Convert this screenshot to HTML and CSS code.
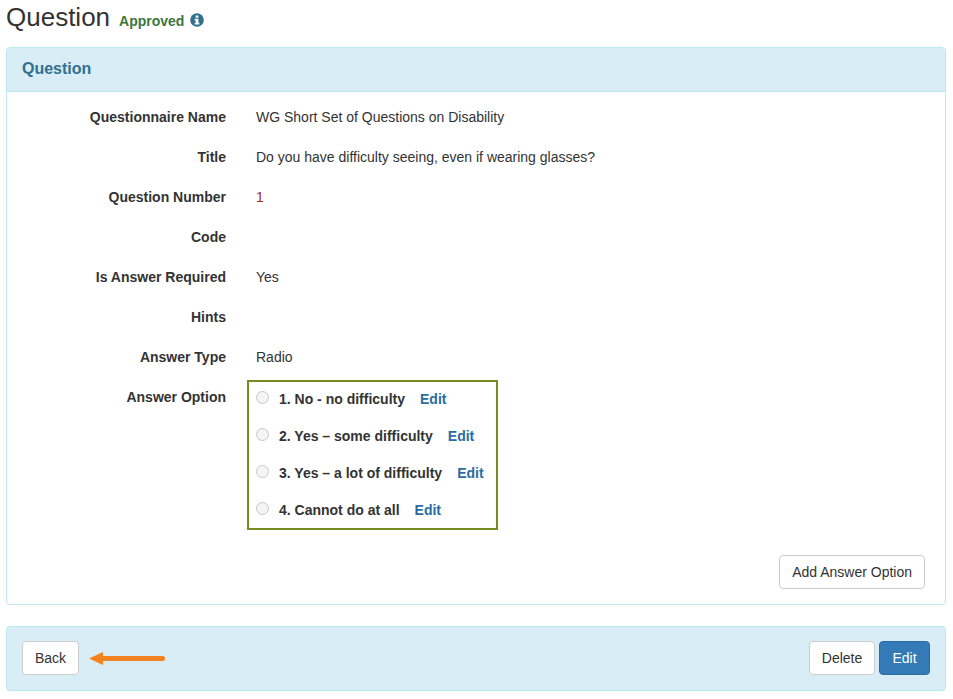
FILE: index.html
```html
<!DOCTYPE html>
<html lang="en">
<head>
<meta charset="utf-8">
<title>Question</title>
<link rel="stylesheet" href="styles.css">
</head>
<body>
<header class="page-head">
  <h1 class="page-title">Question</h1>
  <span class="status">Approved</span>
  <svg class="info-icon" viewBox="0 0 14 14" width="14" height="14" aria-hidden="true">
    <circle cx="7" cy="7" r="6.8" fill="#31708f"/>
    <rect x="5.6" y="2.4" width="2.8" height="2.4" rx=".4" fill="#fff"/>
    <path d="M4.700 5.800h3.700v4h1v1.700H4.700V9.800h1V7.500h-1z" fill="#fff"/>
  </svg>
</header>

<section class="panel">
  <div class="panel-heading"><h2 class="panel-title">Question</h2></div>
  <div class="panel-body">
    <div class="field"><div class="field-label">Questionnaire Name</div><div class="field-value">WG Short Set of Questions on Disability</div></div>
    <div class="field"><div class="field-label">Title</div><div class="field-value">Do you have difficulty seeing, even if wearing glasses?</div></div>
    <div class="field"><div class="field-label">Question Number</div><div class="field-value number">1</div></div>
    <div class="field"><div class="field-label">Code</div><div class="field-value"></div></div>
    <div class="field"><div class="field-label">Is Answer Required</div><div class="field-value">Yes</div></div>
    <div class="field"><div class="field-label">Hints</div><div class="field-value"></div></div>
    <div class="field"><div class="field-label">Answer Type</div><div class="field-value">Radio</div></div>
    <div class="field field-options">
      <div class="field-label">Answer Option</div>
      <div class="options">
        <div class="option"><span class="radio"></span><span class="option-text">1. No - no difficulty</span><a class="link" href="#">Edit</a></div>
        <div class="option"><span class="radio"></span><span class="option-text">2. Yes – some difficulty</span><a class="link" href="#">Edit</a></div>
        <div class="option"><span class="radio"></span><span class="option-text">3. Yes – a lot of difficulty</span><a class="link" href="#">Edit</a></div>
        <div class="option"><span class="radio"></span><span class="option-text">4. Cannot do at all</span><a class="link" href="#">Edit</a></div>
      </div>
    </div>
    <div class="add-row"><button class="btn" type="button">Add Answer Option</button></div>
  </div>
</section>

<section class="panel footer-panel">
  <div class="footer-left">
    <button class="btn" type="button">Back</button>
    <svg class="arrow" viewBox="0 0 76 15" width="76" height="15" aria-hidden="true">
      <path d="M0 7.500 14 1v4h59.500a2.500 2.500 0 0 1 0 5H14v4z" fill="#f58220"/>
    </svg>
  </div>
  <div class="footer-right">
    <button class="btn btn-delete" type="button">Delete</button>
    <button class="btn btn-primary" type="button">Edit</button>
  </div>
</section>
</body>
</html>
```

FILE: styles.css
```css
* { box-sizing: border-box; }

html, body { background: #fff; }

body {
  margin: 0;
  padding: 0 7px 0 6px;
  font-family: "Liberation Sans", Arial, sans-serif;
  font-size: 14px;
  line-height: 20px;
  color: #333;
}

.page-head {
  display: flex;
  align-items: center;
  height: 47px;
  padding-bottom: 13px;
}

.page-title {
  margin: 0;
  font-size: 26px;
  font-weight: 400;
  line-height: 34px;
}

.status {
  margin-left: 9px;
  margin-top: 8px;
  font-weight: 700;
  color: #3c763d;
}

.info-icon {
  margin-left: 6px;
  margin-top: 5px;
}

.panel {
  border: 1px solid #bce8f1;
  border-radius: 4px;
  background: #fff;
}

.panel-heading {
  height: 44px;
  padding: 10px 15px;
  background: #d9edf7;
  border-bottom: 1px solid #bce8f1;
  border-radius: 3px 3px 0 0;
}

.panel-title {
  margin: 0;
  font-size: 16px;
  font-weight: 700;
  line-height: 22px;
  color: #31708f;
}

.panel-body {
  padding: 15px 20px 15px 0;
}

.field {
  display: flex;
  min-height: 20px;
  margin-bottom: 20px;
}

.field-label {
  flex: 0 0 219px;
  text-align: right;
  font-weight: 700;
}

.field-value {
  margin-left: 30px;
}

.number { color: #a5281b; }

.field-options { margin-bottom: 25px; }

.options {
  display: flex;
  flex-direction: column;
  gap: 17px;
  margin-top: -7px;
  margin-left: 21px;
  padding: 7px 12px 8px 7px;
  border: 2px solid #758d1e;
}

.option {
  display: flex;
  align-items: flex-start;
  font-weight: 700;
}

.radio {
  flex: none;
  width: 13px;
  height: 13px;
  margin-top: 2px;
  margin-right: 10px;
  border: 1px solid #c8c8c8;
  border-radius: 50%;
  background: #f4f4f4;
}

.option-text { margin-right: 15px; }

.link {
  color: #2b6ca3;
  text-decoration: none;
}

.add-row {
  display: flex;
  justify-content: flex-end;
}

.btn {
  height: 34px;
  padding: 6px 12px;
  font: inherit;
  color: #333;
  background: #fff;
  border: 1px solid #ccc;
  border-radius: 4px;
}

.btn-delete {
  width: 66px;
  padding: 6px 0;
}

.btn-primary {
  width: 51px;
  padding: 6px 0;
  color: #fff;
  background: #337ab7;
  border-color: #2e6da4;
}

.footer-panel {
  display: flex;
  justify-content: space-between;
  align-items: flex-start;
  height: 65px;
  margin-top: 21px;
  padding: 14px 15px 0;
  background: #d9edf7;
}

.footer-left,
.footer-right {
  display: flex;
  align-items: center;
}

.footer-right { gap: 4px; }

.arrow { margin-left: 10px; }
```
